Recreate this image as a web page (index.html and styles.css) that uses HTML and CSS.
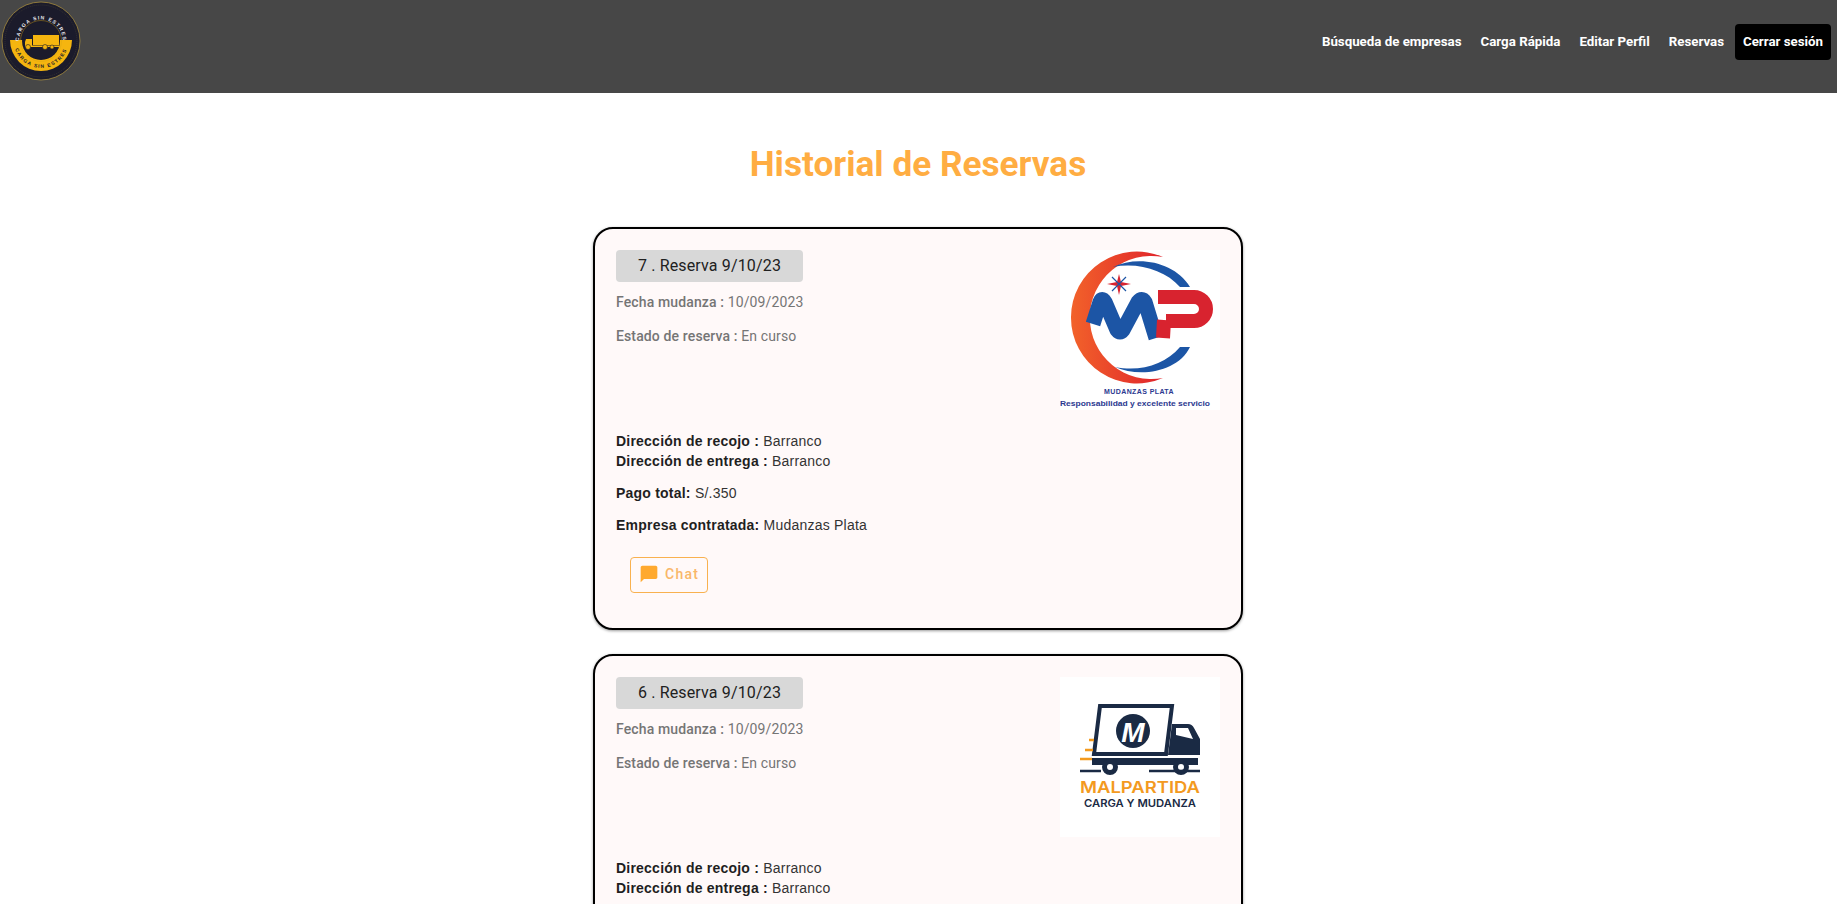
FILE: index.html
```html
<!DOCTYPE html>
<html lang="es">
<head>
    <meta charset="UTF-8">
    <meta name="viewport" content="width=device-width, initial-scale=1.0">
    <title>Historial de Reservas</title>
    <link rel="stylesheet" href="styles.css">
</head>
<body>
    <header class="topbar">
        <svg class="brand" viewBox="0 0 80 80" aria-label="Carga sin estrés">
            <defs>
                <path id="arcTop" d="M19 47 A22 22 0 1 1 61 47"/>
                <path id="arcBottom" d="M13 40 A27 27 0 0 0 67 40"/>
            </defs>
            <circle cx="40" cy="40" r="39" fill="#1b1b2b" stroke="#a58a3c" stroke-width="0.8"/>
            <circle cx="40" cy="40" r="36" fill="none" stroke="#4a4636" stroke-width="0.5" stroke-dasharray="1 1"/>
            <path d="M9 39 H71 A31 31 0 0 1 9 39 Z" fill="#f5b50f"/>
            <circle cx="40" cy="40" r="19" fill="#1b1b2b"/>
            <circle cx="40" cy="40" r="20.5" fill="none" stroke="#d6a514" stroke-width="0.4"/>
            <rect x="32" y="34" width="26" height="10" fill="#f5b50f"/>
            <path d="M25 38 h6 v8 h-7 v-5 z" fill="#f5b50f"/>
            <rect x="25" y="44.5" width="33" height="1.5" fill="#f5b50f"/>
            <circle cx="27" cy="46" r="2.5" fill="#f5b50f" stroke="#1b1b2b" stroke-width="0.6"/>
            <circle cx="44" cy="46" r="2.5" fill="#f5b50f" stroke="#1b1b2b" stroke-width="0.6"/>
            <circle cx="51" cy="46" r="2" fill="#f5b50f" stroke="#1b1b2b" stroke-width="0.6"/>
            <text class="brand-top"><textPath href="#arcTop" startOffset="50%" text-anchor="middle">CARGA SIN ESTRES</textPath></text>
            <text class="brand-bottom"><textPath href="#arcBottom" startOffset="50%" text-anchor="middle">CARGA SIN ESTRES</textPath></text>
        </svg>
        <nav class="menu">
            <a class="menu-link" href="#">Búsqueda de empresas</a>
            <a class="menu-link" href="#">Carga Rápida</a>
            <a class="menu-link" href="#">Editar Perfil</a>
            <a class="menu-link" href="#">Reservas</a>
            <a class="logout" href="#">Cerrar sesión</a>
        </nav>
    </header>

    <main class="content">
        <h1 class="page-title">Historial de Reservas</h1>

        <section class="card">
            <div class="card-top">
                <div class="card-info">
                    <div class="chip">7 . Reserva 9/10/23</div>
                    <p class="muted"><strong>Fecha mudanza :</strong> 10/09/2023</p>
                    <p class="muted"><strong>Estado de reserva :</strong> En curso</p>
                </div>
                <svg class="company-logo" viewBox="0 0 160 160" aria-label="Mudanzas Plata">
                    <defs>
                        <linearGradient id="crescent" x1="0" y1="0" x2="1" y2="0">
                            <stop offset="0" stop-color="#f2622a"/>
                            <stop offset="1" stop-color="#e0242c"/>
                        </linearGradient>
                    </defs>
                    <rect width="160" height="160" fill="#fff"/>
                    <path d="M103 7 A65.9 65.9 0 1 0 103 128 A61.6 61.6 0 1 1 103 7 Z" fill="url(#crescent)"/>
                    <path d="M53 17 C78 5 115 12 130 37 L120 37 C105 20 78 12 53 17 Z" fill="#1c55a5"/>
                    <path d="M55 117 C80 128 118 122 130 97 L120 97 C105 115 80 122 55 117 Z" fill="#1c55a5"/>
                    <path d="M59 24 L61 32 L71 34 L61 36 L59 45 L57 36 L47 34 L57 32 Z" fill="#d8232f"/>
                    <path d="M52 27 L66 41 M66 27 L52 41" fill="none" stroke="#1c55a5" stroke-width="1.2"/>
                    <path d="M33 74 L40 52 Q42 47 45 52 L57 80 Q60 84 63 80 L78 52 Q82 47 85 52 L96 88" fill="none" stroke="#1c55a5" stroke-width="15" stroke-linejoin="round"/>
                    <path d="M98 47 H134 A12 12 0 0 1 134 71 H106 M104 70 L103 88" fill="none" stroke="#d8232f" stroke-width="14"/>
                    <text class="plata-name" x="79" y="144">MUDANZAS PLATA</text>
                    <text class="plata-slogan" x="0" y="156" textLength="150" lengthAdjust="spacingAndGlyphs">Responsabilidad y excelente servicio</text>
                </svg>
            </div>
            <div class="card-details">
                <div class="address">
                    <div><strong>Dirección de recojo :</strong> Barranco</div>
                    <div><strong>Dirección de entrega :</strong> Barranco</div>
                </div>
                <div class="detail"><strong>Pago total:</strong> S/.350</div>
                <div class="detail"><strong>Empresa contratada:</strong> Mudanzas Plata</div>
            </div>
            <button class="chat-button">
                <svg class="chat-icon" viewBox="0 0 24 24"><path d="M20 2H4c-1.1 0-2 .9-2 2v18l4-4h14c1.1 0 2-.9 2-2V4c0-1.1-.9-2-2-2z"/></svg>
                Chat
            </button>
        </section>

        <section class="card">
            <div class="card-top">
                <div class="card-info">
                    <div class="chip">6 . Reserva 9/10/23</div>
                    <p class="muted"><strong>Fecha mudanza :</strong> 10/09/2023</p>
                    <p class="muted"><strong>Estado de reserva :</strong> En curso</p>
                </div>
                <svg class="company-logo" viewBox="0 0 160 160" aria-label="Malpartida">
                    <rect width="160" height="160" fill="#fff"/>
                    <path d="M40 29 H112 L106 77 H34 Z" fill="#fff" stroke="#1a2a44" stroke-width="4"/>
                    <circle cx="73" cy="54" r="17" fill="#1a2a44"/>
                    <text class="truck-letter" x="73" y="65">M</text>
                    <path d="M112 47 H128 Q132 47 134 51 L140 62 V78 H108 Z" fill="#1a2a44"/>
                    <path d="M116 51 H128 L133 62 L116 58 Z" fill="#fff"/>
                    <rect x="32" y="81" width="106" height="7" fill="#1a2a44"/>
                    <circle cx="50" cy="90" r="5.5" fill="#fff" stroke="#1a2a44" stroke-width="5"/>
                    <circle cx="121" cy="90" r="5.5" fill="#fff" stroke="#1a2a44" stroke-width="5"/>
                    <path d="M20 94 H41 M89 94 H140" stroke="#1a2a44" stroke-width="2.5"/>
                    <path d="M29 63 H34 M25 73 H33 M20 82 H32" stroke="#f39a1f" stroke-width="2.5"/>
                    <text class="truck-name" x="20" y="116" textLength="120" lengthAdjust="spacingAndGlyphs">MALPARTIDA</text>
                    <text class="truck-slogan" x="24" y="130" textLength="112" lengthAdjust="spacingAndGlyphs">CARGA Y MUDANZA</text>
                </svg>
            </div>
            <div class="card-details">
                <div class="address">
                    <div><strong>Dirección de recojo :</strong> Barranco</div>
                    <div><strong>Dirección de entrega :</strong> Barranco</div>
                </div>
                <div class="detail"><strong>Pago total:</strong> S/.350</div>
                <div class="detail"><strong>Empresa contratada:</strong> Malpartida</div>
            </div>
            <button class="chat-button">
                <svg class="chat-icon" viewBox="0 0 24 24"><path d="M20 2H4c-1.1 0-2 .9-2 2v18l4-4h14c1.1 0 2-.9 2-2V4c0-1.1-.9-2-2-2z"/></svg>
                Chat
            </button>
        </section>
    </main>
</body>
</html>
```

FILE: styles.css
```css
html, body {
    height: 904px;
    overflow: hidden;
}
body {
    margin: 0;
    font-family: Roboto, sans-serif;
    background-color: #fff;
}
.topbar {
    display: flex;
    justify-content: space-between;
    height: 93px;
    background-color: #474747;
    padding: 0 6px 0 1px;
}
.brand {
    width: 80px;
    height: 80px;
    margin-top: 1px;
}
.brand-top {
    font: bold 5px "Liberation Sans", sans-serif;
    letter-spacing: 1.2px;
    fill: #e8e8ee;
}
.brand-bottom {
    font: bold 5px "Liberation Sans", sans-serif;
    letter-spacing: 1.2px;
    fill: #1b1b2b;
}
.menu {
    display: flex;
    align-items: center;
    gap: 19px;
    height: 35px;
    margin-top: 24px;
}
.menu-link {
    color: #fff;
    font-size: 13.3px;
    font-weight: 700;
    text-decoration: none;
}
.logout {
    margin-left: -8px;
    padding: 0 8px;
    height: 36px;
    line-height: 35px;
    color: #fff;
    background-color: #000;
    border-radius: 4px;
    font-size: 13.3px;
    font-weight: 700;
    text-decoration: none;
}
.content {
    display: flex;
    flex-direction: column;
    align-items: center;
    padding-right: 1px;
}
.page-title {
    margin: 50px 0 42px;
    font-size: 35.2px;
    line-height: 42px;
    font-weight: 700;
    color: #ffad42;
}
.card {
    box-sizing: border-box;
    width: 650px;
    height: 403px;
    margin-bottom: 24px;
    padding: 21px 21px 0;
    flex-shrink: 0;
    background-color: #fff9f9;
    border: 2px solid #000;
    border-radius: 20px;
    box-shadow: 0 1px 3px rgba(0, 0, 0, 0.4);
}
.card-top {
    display: flex;
    justify-content: space-between;
    height: 181px;
}
.chip {
    width: 187px;
    height: 32px;
    line-height: 32px;
    text-align: center;
    font-size: 16px;
    letter-spacing: 0.15px;
    color: #212121;
    background-color: #d8d8d8;
    border-radius: 4px;
}
.muted {
    margin: 9px 0 0;
    height: 23px;
    line-height: 23px;
    font-size: 14px;
    letter-spacing: 0.13px;
    color: #757575;
}
.muted + .muted {
    margin-top: 11px;
}
.muted strong {
    font-weight: 500;
}
.company-logo {
    width: 160px;
    height: 160px;
}
.plata-name {
    font: bold 7px "Liberation Sans", sans-serif;
    letter-spacing: 0.4px;
    text-anchor: middle;
    fill: #2b3990;
}
.plata-slogan {
    font: bold 7.5px "Liberation Sans", sans-serif;
    fill: #2b3990;
}
.truck-letter {
    font: italic bold 28px "Liberation Sans", sans-serif;
    text-anchor: middle;
    fill: #fff;
}
.truck-name {
    font: 600 16.5px Inter, sans-serif;
    fill: #f39a1f;
}
.truck-slogan {
    font: 600 10.5px Inter, sans-serif;
    fill: #1a2a44;
}
.card-details {
    font-family: "Liberation Sans", sans-serif;
    font-size: 14px;
    line-height: 20px;
    letter-spacing: 0.22px;
    color: #333;
}
.card-details strong {
    color: #1f1f1f;
}
.address {
    margin-bottom: 12px;
}
.detail {
    margin-bottom: 12px;
}
.chat-button {
    display: flex;
    align-items: center;
    gap: 6px;
    margin: 22px 0 0 14px;
    width: 78px;
    height: 36px;
    padding: 0 0 2px 8px;
    font-family: Roboto, sans-serif;
    font-size: 14px;
    font-weight: 500;
    letter-spacing: 1.25px;
    color: #f9b769;
    background: transparent;
    border: 1px solid #f9b14f;
    border-radius: 4px;
}
.chat-icon {
    width: 20px;
    height: 20px;
    fill: #ffa92e;
}
```
